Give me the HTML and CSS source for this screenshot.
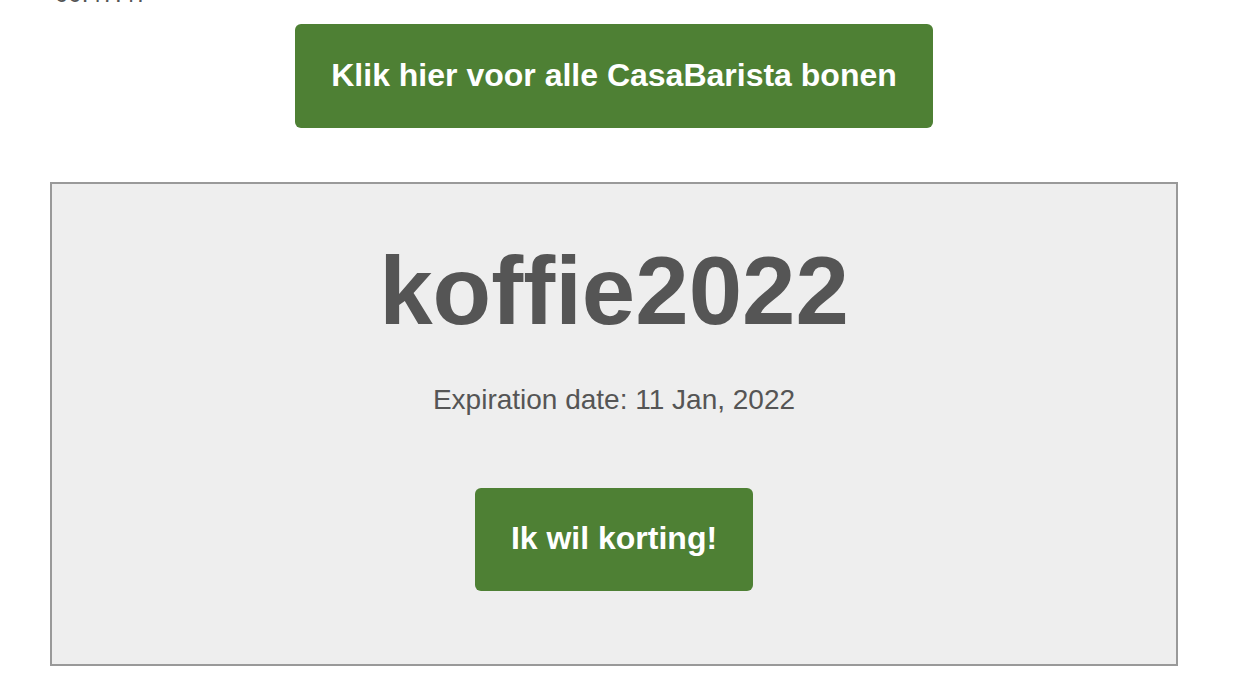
FILE: index.html
```html
<!DOCTYPE html>
<html>
<head>
<meta charset="utf-8">
<link rel="stylesheet" href="styles.css">
</head>
<body>
<div class="page">
  <div class="timer">00:47:47</div>
  <div class="top-row">
    <a class="btn btn-wide" href="#">Klik hier voor alle CasaBarista bonen</a>
  </div>
  <div class="coupon">
    <div class="code">koffie2022</div>
    <div class="expiry">Expiration date: 11 Jan, 2022</div>
    <a class="btn btn-small" href="#">Ik wil korting!</a>
  </div>
</div>
</body>
</html>
```
FILE: styles.css
```css
html, body {
  margin: 0;
  padding: 0;
  background: #ffffff;
  font-family: "Liberation Sans", Arial, sans-serif;
  overflow: hidden;
}
.page {
  width: 1236px;
  height: 688px;
}
.timer {
  margin-left: 55px;
  margin-top: -18px;
  height: 24px;
  line-height: 24px;
  font-size: 24px;
  color: #555555;
}
.top-row {
  display: flex;
  justify-content: center;
  width: 1228px;
  margin-top: 18px;
}
.btn {
  display: flex;
  align-items: center;
  justify-content: center;
  background: #4e8034;
  color: #ffffff;
  font-weight: bold;
  text-decoration: none;
  border-radius: 6px;
  box-sizing: border-box;
}
.btn-wide {
  width: 638px;
  height: 104px;
  font-size: 32px;
  padding-bottom: 2px;
}
.coupon {
  margin: 54px 0 0 50px;
  width: 1128px;
  height: 484px;
  box-sizing: border-box;
  border: 2px solid #999999;
  background: #eeeeee;
  display: flex;
  flex-direction: column;
  align-items: center;
  color: #555555;
}
.code {
  margin-top: 52px;
  font-size: 96px;
  font-weight: bold;
  line-height: 110px;
}
.expiry {
  margin-top: 38px;
  font-size: 28px;
  line-height: 32px;
}
.btn-small {
  margin-top: 72px;
  width: 278px;
  height: 103px;
  font-size: 32px;
  padding-bottom: 2px;
}
```
